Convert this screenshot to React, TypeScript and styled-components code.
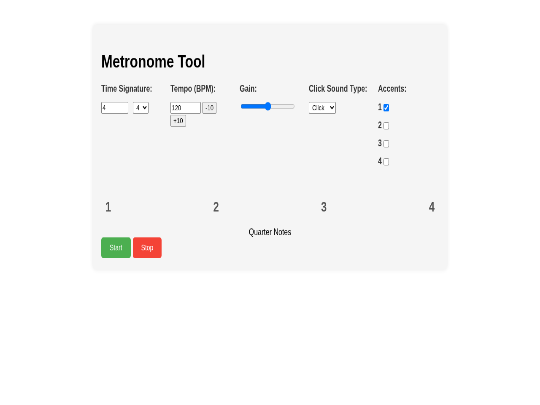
import React, { useState } from 'react';
import styled, { createGlobalStyle } from 'styled-components';

// The reference was captured at 1280x720 and squeezed into 540x405,
// so the page is laid out at its natural size and scaled as a whole.
const GlobalStyle = createGlobalStyle`
  html, body {
    margin: 0;
    padding: 0;
    overflow: hidden;
    background: #ffffff;
  }
  body {
    font-family: "Liberation Sans", Arial, sans-serif;
    color: #333;
  }
  #root {
    width: 540px;
    height: 405px;
    overflow: hidden;
  }
`;

const Stage = styled.div`
  width: 1280px;
  height: 720px;
  padding-top: 44px;
  box-sizing: border-box;
  transform: scale(0.421875, 0.5625);
  transform-origin: 0 0;
`;

const Card = styled.div`
  width: 800px;
  margin: 0 auto;
  padding: 20px;
  background: #f5f5f5;
  border-radius: 8px;
  box-shadow: 0 0 10px rgba(0, 0, 0, 0.1);
  will-change: transform;
`;

const Title = styled.h1`
  margin: 27px 0 21px;
  font-size: 32px;
  font-weight: bold;
  color: #000;
`;

const Controls = styled.div`
  display: flex;
  gap: 20px;
`;

const Group = styled.div`
  flex: 1;
  min-width: 0;
`;

const Label = styled.div<{ $space?: number }>`
  font-size: 16px;
  font-weight: bold;
  color: #333;
  margin-bottom: ${(p) => p.$space ?? 14}px;
`;

const ControlRow = styled.div<{ $gap?: number }>`
  display: flex;
  flex-wrap: wrap;
  align-items: center;
  gap: 2px ${(p) => p.$gap ?? 4}px;
`;

const TextInput = styled.input<{ $w: number }>`
  width: ${(p) => p.$w}px;
  height: 17px;
  padding: 1px 2px;
  margin: 0;
  border: 1px solid #767676;
  border-radius: 2px;
  background: #fff;
  font: 13.33px "Liberation Sans", Arial, sans-serif;
  color: #000;
`;

const Select = styled.select`
  height: 21px;
  margin: 0;
  padding: 0 4px 0 3px;
  font: 13.33px "Liberation Sans", Arial, sans-serif;
  color: #000;
  background: #fff;
  border: 1px solid #767676;
  border-radius: 2px;
`;

const SmallButton = styled.button`
  height: 21px;
  margin: 0;
  padding: 1px 6px;
  font: 13.33px "Liberation Sans", Arial, sans-serif;
  color: #000;
  background: #efefef;
  border: 1px solid #767676;
  border-radius: 2px;
`;

const Range = styled.input`
  width: 129px;
  margin: 0 2px;
  accent-color: #0075ff;
`;

const AccentRow = styled.label`
  display: flex;
  align-items: center;
  height: 32px;
  font-size: 16px;
  font-weight: bold;
  color: #333;

  input {
    width: 13px;
    height: 13px;
    margin: 3px 3px 3px 4px;
  }
`;

const Beats = styled.div`
  display: flex;
  justify-content: space-between;
  margin-top: 41px;
`;

const Beat = styled.div`
  padding: 10px;
  font-size: 24px;
  font-weight: bold;
  color: #555;
`;

const NoteValue = styled.div`
  margin-top: 12px;
  text-align: center;
  font-size: 16px;
  color: #000;
`;

const Actions = styled.div`
  display: flex;
  gap: 5px;
`;

const ActionButton = styled.button<{ $color: string }>`
  padding: 10px 20px;
  font: 14px "Liberation Sans", Arial, sans-serif;
  line-height: 17px;
  color: #fff;
  background: ${(p) => p.$color};
  border: none;
  border-radius: 5px;
`;

export default function App() {
  const [accents, setAccents] = useState([true, false, false, false]);

  const toggle = (i: number) =>
    setAccents((a) => a.map((v, j) => (j === i ? !v : v)));

  return (
    <>
      <GlobalStyle />
      <Stage>
        <Card>
          <Title>Metronome Tool</Title>

          <Controls>
            <Group>
              <Label>Time Signature:</Label>
              <ControlRow $gap={11}>
                <TextInput type="number" $w={58} defaultValue={4} />
                <Select defaultValue="4">
                  <option value="2">2</option>
                  <option value="4">4</option>
                  <option value="8">8</option>
                </Select>
              </ControlRow>
            </Group>

            <Group>
              <Label>Tempo (BPM):</Label>
              <ControlRow>
                <TextInput type="number" $w={66} defaultValue={120} />
                <SmallButton>-10</SmallButton>
                <SmallButton>+10</SmallButton>
              </ControlRow>
            </Group>

            <Group>
              <Label>Gain:</Label>
              <ControlRow>
                <Range type="range" min={0} max={1} step={0.01} defaultValue={0.5} />
              </ControlRow>
            </Group>

            <Group>
              <Label>Click Sound Type:</Label>
              <ControlRow>
                <Select defaultValue="click">
                  <option value="click">Click</option>
                  <option value="beep">Beep</option>
                  <option value="wood">Wood</option>
                </Select>
              </ControlRow>
            </Group>

            <Group>
              <Label $space={8}>Accents:</Label>
              {accents.map((on, i) => (
                <AccentRow key={i}>
                  {i + 1}
                  <input type="checkbox" checked={on} onChange={() => toggle(i)} />
                </AccentRow>
              ))}
            </Group>
          </Controls>

          <Beats>
            {[1, 2, 3, 4].map((n) => (
              <Beat key={n}>{n}</Beat>
            ))}
          </Beats>

          <NoteValue>Quarter Notes</NoteValue>

          <Actions>
            <ActionButton $color="#4caf50">Start</ActionButton>
            <ActionButton $color="#f44336">Stop</ActionButton>
          </Actions>
        </Card>
      </Stage>
    </>
  );
}
